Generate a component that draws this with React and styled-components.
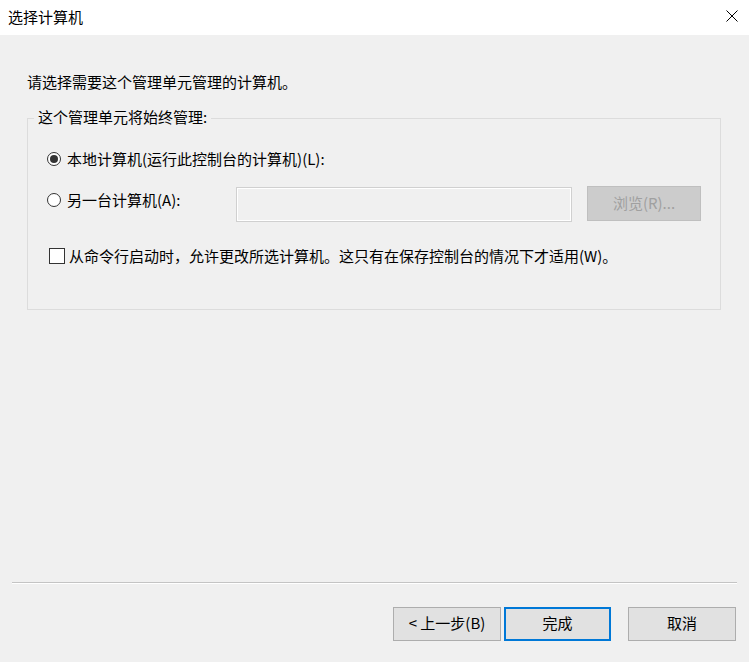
import React from "react";
import styled, { createGlobalStyle } from "styled-components";

const Global = createGlobalStyle`
  *, *::before, *::after { box-sizing: border-box; }
  html, body { margin: 0; padding: 0; background: #f0f0f0; }
  body {
    font-family: "Noto Sans CJK SC", "Noto Sans", sans-serif;
    font-size: 15px;
    line-height: 20px;
    color: #000;
  }
`;

const Window = styled.div`
  display: flex;
  flex-direction: column;
  width: 749px;
  height: 662px;
  background: #f0f0f0;
  overflow: hidden;
`;

const TitleBar = styled.div`
  display: flex;
  align-items: center;
  justify-content: space-between;
  height: 35px;
  padding: 0 11px 0 8px;
  background: #fff;
`;

const Title = styled.div`
  font-size: 15px;
  line-height: 20px;
  margin-bottom: 2px;
`;

const CloseButton = styled.div`
  display: flex;
  width: 12px;
  height: 12px;
  margin-bottom: 3px;
`;

const Content = styled.div`
  flex: 1;
  display: flex;
  flex-direction: column;
  padding: 37px 28px 0 27px;
`;

const Intro = styled.div`
  line-height: 20px;
`;

const Group = styled.fieldset`
  margin: 15px 0 0 0;
  min-width: 0;
  border: 1px solid #dcdcdc;
  padding: 19px 0 43px 0;
`;

const Legend = styled.legend`
  margin-left: 6px;
  padding: 0 4px 3px 4px;
  line-height: 20px;
`;

const Row = styled.div`
  display: flex;
  align-items: ${(p) => (p.$top ? "flex-start" : "center")};
  margin-top: ${(p) => p.$mt || 0}px;
  margin-left: ${(p) => p.$ml || 0}px;
`;

const Choice = styled.label`
  display: flex;
  align-items: center;
  gap: 6px;
  width: ${(p) => (p.$w ? p.$w + "px" : "auto")};
  margin-top: ${(p) => p.$mt || 0}px;
  line-height: 20px;
  white-space: nowrap;
`;

const Radio = styled.input.attrs({ type: "radio" })`
  appearance: none;
  margin: 0;
  flex: none;
  width: 14px;
  height: 14px;
  border: 1px solid #333;
  border-radius: 50%;
  background: #fff;
  display: grid;
  place-items: center;
  &::before {
    content: "";
    width: 8px;
    height: 8px;
    border-radius: 50%;
    background: #333;
    opacity: 0;
  }
  &:checked::before { opacity: 1; }
`;

const Check = styled.input.attrs({ type: "checkbox" })`
  appearance: none;
  margin: 0;
  flex: none;
  width: 16px;
  height: 16px;
  border: 1px solid #333;
  background: #fff;
`;

const CheckLabel = styled.label`
  display: flex;
  align-items: center;
  gap: 4px;
  line-height: 20px;
  white-space: nowrap;
`;

const TextBox = styled.input`
  width: 336px;
  height: 35px;
  margin: 1px 0 0 0;
  border: 1px solid #d0d0d0;
  box-shadow: inset 0 0 0 1px #fff;
  background: #f0f0f0;
  font: inherit;
  padding: 0 4px;
  outline: none;
`;

const Button = styled.button`
  display: flex;
  align-items: center;
  justify-content: center;
  width: ${(p) => p.$w}px;
  height: ${(p) => p.$h || 34}px;
  margin-left: ${(p) => p.$ml || 0}px;
  padding: 0 0 2px 0;
  font-family: inherit;
  font-size: 15px;
  line-height: 20px;
  color: ${(p) => (p.disabled ? "#a0a0a0" : "#000")};
  background: ${(p) => (p.disabled ? "#cccccc" : "#e1e1e1")};
  border: ${(p) =>
    p.$default ? "2px solid #0078d7" : p.disabled ? "1px solid #bfbfbf" : "1px solid #adadad"};
`;

const Footer = styled.div`
  display: flex;
  flex-direction: column;
  padding: 0 12px 21px 12px;
`;

const Separator = styled.div`
  border-top: 1px solid #c4c4c4;
  border-bottom: 1px solid #fff;
`;

const ButtonRow = styled.div`
  display: flex;
  justify-content: flex-end;
  margin-top: 23px;
  padding-right: 1px;
`;

export default function App() {
  return (
    <>
      <Global />
      <Window>
        <TitleBar>
          <Title>选择计算机</Title>
          <CloseButton>
            <svg width="12" height="12" viewBox="0 0 12 12">
              <path d="M0.5 0.5 L11.5 11.5 M11.5 0.5 L0.5 11.5" stroke="#000" strokeWidth="1" fill="none" />
            </svg>
          </CloseButton>
        </TitleBar>
        <Content>
          <Intro>请选择需要这个管理单元管理的计算机。</Intro>
          <Group>
            <Legend>这个管理单元将始终管理:</Legend>
            <Row $ml={19}>
              <Choice>
                <Radio name="target" defaultChecked />
                本地计算机(运行此控制台的计算机)(L):
              </Choice>
            </Row>
            <Row $top $mt={17} $ml={19}>
              <Choice $w={189} $mt={4}>
                <Radio name="target" />
                另一台计算机(A):
              </Choice>
              <TextBox disabled />
              <Button $w={114} $h={35} $ml={15} disabled>
                浏览(R)...
              </Button>
            </Row>
            <Row $mt={24} $ml={21}>
              <CheckLabel>
                <Check />
                从命令行启动时，允许更改所选计算机。这只有在保存控制台的情况下才适用(W)。
              </CheckLabel>
            </Row>
          </Group>
        </Content>
        <Footer>
          <Separator />
          <ButtonRow>
            <Button $w={108}>&lt; 上一步(B)</Button>
            <Button $w={107} $ml={3} $default>
              完成
            </Button>
            <Button $w={108} $ml={17}>
              取消
            </Button>
          </ButtonRow>
        </Footer>
      </Window>
    </>
  );
}
